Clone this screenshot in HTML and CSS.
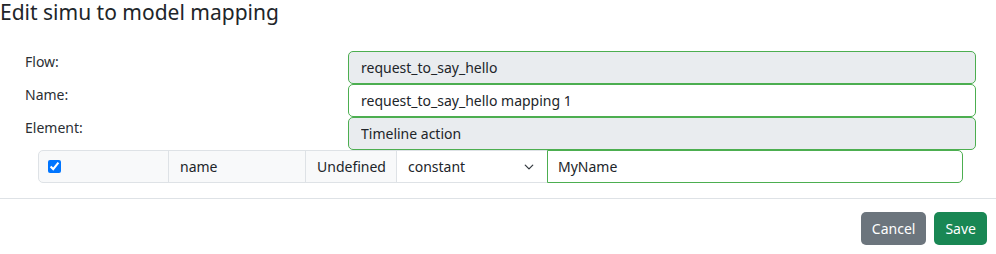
FILE: index.html
```html
<!DOCTYPE html>
<html lang="en">
<head>
    <meta charset="UTF-8">
    <meta name="viewport" content="width=device-width, initial-scale=1.0">
    <link rel="stylesheet" href="styles.css">
</head>
<body>
    <div class="modal">
        <h5 class="modal-title">Edit simu to model mapping</h5>
        <div class="modal-body">
            <div class="form-grid">
                <label class="form-label">Flow:</label>
                <input class="form-input" type="text" value="request_to_say_hello" readonly>
                <label class="form-label">Name:</label>
                <input class="form-input editable" type="text" value="request_to_say_hello mapping 1">
                <label class="form-label">Element:</label>
                <input class="form-input" type="text" value="Timeline action" readonly>
            </div>
            <div class="mapping-row">
                <div class="cell cell-check"><input type="checkbox" checked></div>
                <div class="cell cell-name">name</div>
                <div class="cell cell-type">Undefined</div>
                <select class="cell cell-select">
                    <option>constant</option>
                </select>
                <input class="cell cell-value" type="text" value="MyName">
            </div>
        </div>
        <div class="modal-footer">
            <button class="btn btn-cancel">Cancel</button>
            <button class="btn btn-save">Save</button>
        </div>
    </div>
</body>
</html>
```

FILE: styles.css
```css
body {
    margin: 0;
    font-family: "Noto Sans", "Open Sans", sans-serif;
    font-size: 14px;
    color: #212529;
    background: #fff;
}

.modal-title {
    margin: 0;
    font-size: 21px;
    font-weight: 400;
    line-height: 25px;
}

.modal-body {
    padding: 26px 20px 15px 25px;
}

.form-grid {
    display: grid;
    grid-template-columns: 323px 1fr;
}

.form-label {
    line-height: 21px;
    color: #2b2f33;
}

.form-input {
    box-sizing: border-box;
    height: 33px;
    padding: 0 12px;
    border: 1px solid #4cae50;
    border-radius: 5px;
    background: #e9ecef;
    font-family: inherit;
    font-size: 14px;
    color: #212529;
    outline: none;
}

.form-input.editable {
    background: #fff;
}

.mapping-row {
    display: flex;
    height: 33px;
    margin: 0 13px;
}

.cell {
    box-sizing: border-box;
    height: 33px;
    display: flex;
    align-items: center;
    padding: 0 11px;
    border: 1px solid #dee2e6;
    background: #f8f9fa;
    font-family: inherit;
    font-size: 14px;
    color: #212529;
}

.cell + .cell {
    margin-left: -1px;
}

.cell-check {
    width: 131px;
    padding-left: 9px;
    border-radius: 5px 0 0 5px;
}

.cell-check input {
    margin: 0;
    width: 13px;
    height: 13px;
}

.cell-name {
    width: 138px;
}

.cell-type {
    width: 92px;
}

.cell-select {
    width: 152px;
    appearance: none;
    background: #fff url("data:image/svg+xml,%3csvg xmlns='http://www.w3.org/2000/svg' viewBox='0 0 16 16'%3e%3cpath fill='none' stroke='%23343a40' stroke-linecap='round' stroke-linejoin='round' stroke-width='2' d='m2 5 6 6 6-6'/%3e%3c/svg%3e") no-repeat right 11px center / 14px 10px;
    outline: none;
}

.cell-value {
    flex: 1;
    padding: 0 10px;
    border-color: #4cae50;
    border-radius: 0 5px 5px 0;
    background: #fff;
    outline: none;
}

.modal-footer {
    display: flex;
    justify-content: flex-end;
    gap: 8px;
    padding: 13px 9px;
    border-top: 1px solid #dee2e6;
}

.btn {
    height: 33px;
    padding: 0 11px;
    border: 0;
    border-radius: 5px;
    color: #fff;
    font-family: inherit;
    font-size: 14px;
}

.btn-cancel {
    background: #6c757d;
}

.btn-save {
    background: #198754;
}
```
